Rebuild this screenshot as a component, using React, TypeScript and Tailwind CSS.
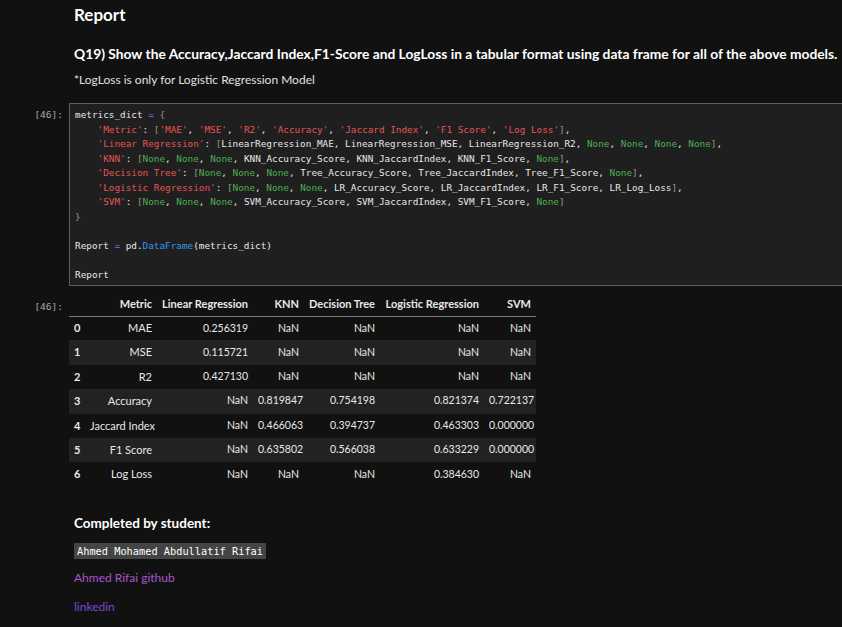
import React from 'react';

const S = ({ children }: { children: React.ReactNode }) => <span className="text-[#e65454]">{children}</span>;
const N = () => <span className="text-[#4caf50]">None</span>;
const B = ({ children }: { children: React.ReactNode }) => <span className="text-[#999977]">{children}</span>;

const noneRow = (
  <>
    <N />, <N />, <N />,
  </>
);

const codeLines: React.ReactNode[] = [
  <>metrics_dict <span className="text-[#aa55ff]">=</span> <B>{'{'}</B></>,
  <>    <S>'Metric'</S>: <B>[</B><S>'MAE'</S>, <S>'MSE'</S>, <S>'R2'</S>, <S>'Accuracy'</S>, <S>'Jaccard Index'</S>, <S>'F1 Score'</S>, <S>'Log Loss'</S><B>]</B>,</>,
  <>    <S>'Linear Regression'</S>: <B>[</B>LinearRegression_MAE, LinearRegression_MSE, LinearRegression_R2, <N />, <N />, <N />, <N /><B>]</B>,</>,
  <>    <S>'KNN'</S>: <B>[</B>{noneRow} KNN_Accuracy_Score, KNN_JaccardIndex, KNN_F1_Score, <N /><B>]</B>,</>,
  <>    <S>'Decision Tree'</S>: <B>[</B>{noneRow} Tree_Accuracy_Score, Tree_JaccardIndex, Tree_F1_Score, <N /><B>]</B>,</>,
  <>    <S>'Logistic Regression'</S>: <B>[</B>{noneRow} LR_Accuracy_Score, LR_JaccardIndex, LR_F1_Score, LR_Log_Loss<B>]</B>,</>,
  <>    <S>'SVM'</S>: <B>[</B>{noneRow} SVM_Accuracy_Score, SVM_JaccardIndex, SVM_F1_Score, <N /><B>]</B></>,
  <><B>{'}'}</B></>,
  <> </>,
  <>Report <span className="text-[#aa55ff]">=</span> pd.<span className="text-[#3399ee]">DataFrame</span>(metrics_dict)</>,
  <> </>,
  <>Report</>,
];

const columns = [
  { label: '', w: 'w-[16px]' },
  { label: 'Metric', w: 'w-[72px]' },
  { label: 'Linear Regression', w: 'w-[96px]' },
  { label: 'KNN', w: 'w-[51px]' },
  { label: 'Decision Tree', w: 'w-[76px]' },
  { label: 'Logistic Regression', w: 'w-[104px]' },
  { label: 'SVM', w: 'w-[52px]' },
];

const rows = [
  ['0', 'MAE', '0.256319', 'NaN', 'NaN', 'NaN', 'NaN'],
  ['1', 'MSE', '0.115721', 'NaN', 'NaN', 'NaN', 'NaN'],
  ['2', 'R2', '0.427130', 'NaN', 'NaN', 'NaN', 'NaN'],
  ['3', 'Accuracy', 'NaN', '0.819847', '0.754198', '0.821374', '0.722137'],
  ['4', 'Jaccard Index', 'NaN', '0.466063', '0.394737', '0.463303', '0.000000'],
  ['5', 'F1 Score', 'NaN', '0.635802', '0.566038', '0.633229', '0.000000'],
  ['6', 'Log Loss', 'NaN', 'NaN', 'NaN', '0.384630', 'NaN'],
];

function Prompt() {
  return (
    <div className="w-[69px] shrink-0 pr-[6px] text-right font-['DejaVu_Sans_Mono',monospace] text-[9.5px] text-[#a8a8a8]">
      [46]:
    </div>
  );
}

export default function App() {
  return (
    <div className="w-[842px] h-[627px] overflow-hidden bg-[#111111] font-['Lato',sans-serif] text-[#e0e0e0]">
      <div className="pl-[74px]">
        <h2 className="pt-[5px] text-[17px] font-bold leading-[20px] text-white">Report</h2>
        <h3 className="mt-[20px] text-[13.8px] font-bold leading-[18px] text-white whitespace-nowrap">
          Q19) Show the Accuracy,Jaccard Index,F1-Score and LogLoss in a tabular format using data frame for all of the above models.
        </h3>
        <p className="mt-[9px] text-[12px] leading-[16px]">*LogLoss is only for Logistic Regression Model</p>
      </div>

      <div className="mt-[15px] flex">
        <div className="pt-[5px]">
          <Prompt />
        </div>
        <div className="w-[800px] shrink-0 border border-[#5f5f5f] bg-[#1f1f1f] pl-[5px] pt-[4px] pb-[3px] font-['DejaVu_Sans_Mono',monospace] text-[9.35px] leading-[14.5px] text-[#e8e8e8]">
          {codeLines.map((line, i) => (
            <div key={i} className="whitespace-pre h-[14.5px]">{line}</div>
          ))}
        </div>
      </div>

      <div className="mt-[5px] flex">
        <div className="pt-[9px]">
          <Prompt />
        </div>
        <table className="table-fixed w-[467px] border-collapse text-[10.5px] text-[#e8e8e8]">
          <thead>
            <tr className="h-[25px] border-b border-[#777777]">
              {columns.map((c, i) => (
                <th key={i} className={`${c.w} px-[5px] pt-[1px] text-right text-[11px] font-bold whitespace-nowrap`}>{c.label}</th>
              ))}
            </tr>
          </thead>
          <tbody>
            {rows.map((r, i) => (
              <tr key={i} className={`h-[24.4px] ${i % 2 === 1 ? 'bg-[#222222]' : ''}`}>
                {r.map((v, j) => (
                  <td key={j} className={`px-[5px] whitespace-nowrap ${j === 0 ? 'text-left font-bold text-[11px]' : j === 1 ? 'text-right text-[11px]' : 'text-right'}`}>{v}</td>
                ))}
              </tr>
            ))}
          </tbody>
        </table>
      </div>

      <div className="pl-[74px]">
        <h4 className="mt-[27px] text-[13.5px] font-bold leading-[18px] text-white">Completed by student:</h4>
        <div className="mt-[5px]">
          <code className="inline-block bg-[#444444] px-[3px] font-['DejaVu_Sans_Mono',monospace] text-[10.3px] leading-[16px] text-white">
            Ahmed Mohamed Abdullatif Rifai
          </code>
        </div>
        <p className="mt-[9px] text-[12px] leading-[16px]">
          <a className="text-[#a855cc]">Ahmed Rifai github</a>
        </p>
        <p className="mt-[13px] text-[12px] leading-[16px]">
          <a className="text-[#7a4ad8]">linkedin</a>
        </p>
      </div>
    </div>
  );
}
